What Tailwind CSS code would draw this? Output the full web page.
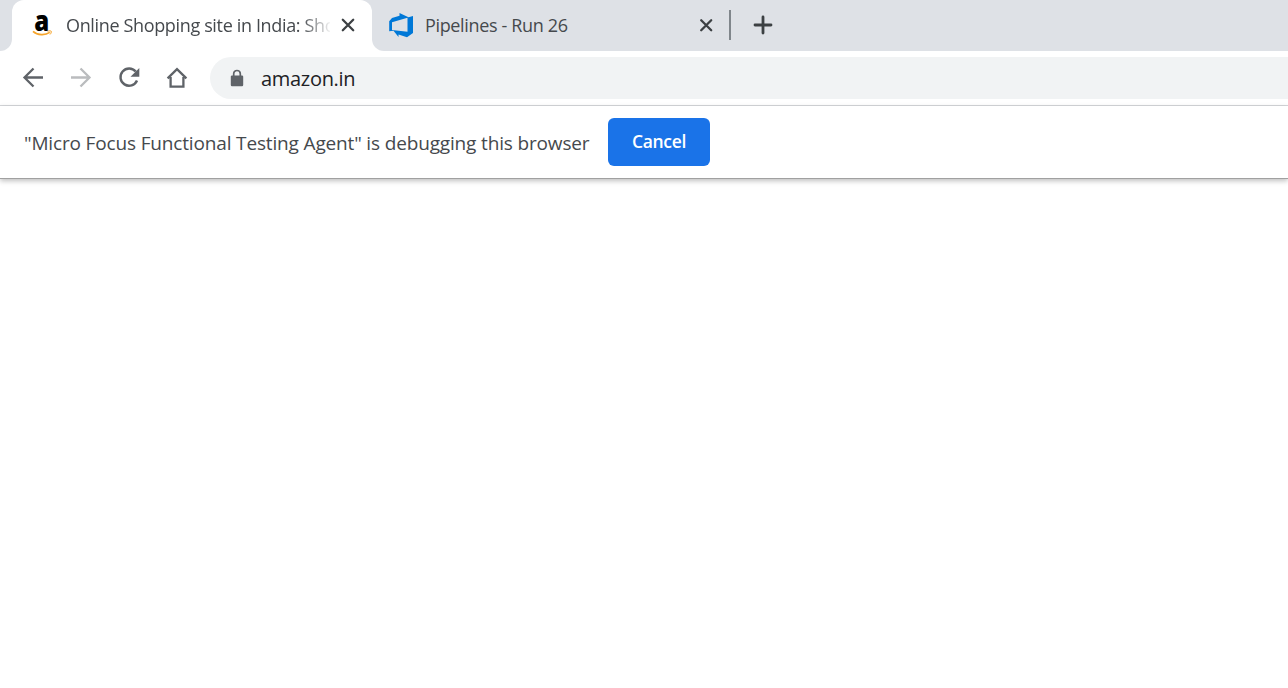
<!DOCTYPE html>
<html lang="en">
<head>
<meta charset="utf-8">
<title>Online Shopping site in India</title>
<script src="https://cdn.jsdelivr.net/npm/@tailwindcss/browser@4"></script>
</head>
<body class="w-[1288px] h-[688px] overflow-hidden bg-white font-['Open_Sans','Noto_Sans',sans-serif]">
<div class="flex flex-col h-full">
  <header class="flex h-[51px] bg-white">
    <div class="w-3 bg-[#dee1e6] rounded-br-[12px]"></div>
    <div class="w-[360px] bg-[#dee1e6]">
      <div class="flex items-center h-full bg-white rounded-t-[12px] pl-[18px] pb-[2px]">
        <svg class="w-6 h-[26px] shrink-0 overflow-visible" viewBox="0 0 24 26">
          <text x="4.200" y="18.900" font-family="Open Sans" font-weight="800" font-size="28.500" textLength="15" lengthAdjust="spacingAndGlyphs" fill="#000">a</text>
          <path d="M3 19.300C7.500 23.400 15 23.600 19.800 20.400" fill="none" stroke="#f7a52b" stroke-width="1.700"/>
          <path d="M17.500 19.200C19.500 18.700 21.500 18.800 21.400 19.500 21.300 20.800 20.800 21.800 20 22.500" fill="none" stroke="#f7a52b" stroke-width="1"/>
        </svg>
        <div class="ml-3 w-[264px] shrink-0 overflow-hidden whitespace-nowrap text-[18px] leading-[26px] tracking-[-0.35px] text-[#45494d] mask-r-from-[24px] mask-r-to-[0px] mask-linear-[none] [mask-image:linear-gradient(to_right,black_236px,transparent_266px)]">Online Shopping site in India: Sho</div>
        <svg class="ml-[10px] w-4 h-4 shrink-0" viewBox="0 0 16 16"><path d="M2.800 2.800l10.400 10.400M13.200 2.800L2.800 13.200" stroke="#3c4043" stroke-width="2.300" stroke-linecap="round"/></svg>
      </div>
    </div>
    <div class="flex-1 flex items-center bg-[#dee1e6] rounded-bl-[12px] pl-4 pb-[2px]">
      <svg class="w-[26px] h-[26px]" viewBox="0 0 26 26"><path fill="#0078d7" fill-rule="evenodd" d="M11.500 1L20.500 5.300 25 4v17l-6 4.200-8.500-2.700v2.500L5.500 18.800 1.200 19.200V9.300L4 6l7.500-2.200zM4 10.200v7.800l15.500 1.700V5.700z"/></svg>
      <div class="ml-[11px] w-[273px] whitespace-nowrap text-[18px] leading-[26px] tracking-[-0.35px] text-[#45494d]">Pipelines - Run 26</div>
      <svg class="w-4 h-4" viewBox="0 0 16 16"><path d="M3.200 3.200l10 10M13.200 3.200l-10 10" stroke="#3c4043" stroke-width="2.300" stroke-linecap="round"/></svg>
      <div class="ml-[15px] w-[1.500px] h-[30px] bg-[#80868b]"></div>
      <svg class="ml-[22.500px] w-5 h-5" viewBox="0 0 20 20"><path d="M10 2v16M2 10h16" stroke="#3c4043" stroke-width="2.800" stroke-linecap="round"/></svg>
    </div>
  </header>
  <nav class="flex items-center h-[55px] border-b border-[#d6d8db] pl-[21px]">
    <svg class="w-6 h-6" viewBox="0 0 24 24"><path d="M22 11.500H3.500M12.500 2.500l-9 9 9 9" fill="none" stroke="#5f6368" stroke-width="2.300"/></svg>
    <svg class="ml-6 w-6 h-6" viewBox="0 0 24 24"><path d="M2 11.500h18.500M11.500 2.500l9 9-9 9" fill="none" stroke="#babcbe" stroke-width="2.300"/></svg>
    <svg class="ml-6 w-6 h-6" viewBox="0 0 24 24"><path d="M18.700 5.600A8.600 8.600 0 1 0 20 14.500" fill="none" stroke="#5f6368" stroke-width="2.400"/><path d="M22.300 2v8.800h-8.800z" fill="#5f6368"/></svg>
    <svg class="ml-6 w-6 h-6" viewBox="0 0 24 24"><path d="M5.600 11v9.700h12.800V11M2.600 12.300L12 3.200l9.400 9.100" fill="none" stroke="#5f6368" stroke-width="2.300"/></svg>
    <div class="ml-[21px] flex-1 h-[42px] flex items-center bg-[#f1f3f4] rounded-l-full pl-5">
      <svg class="w-[14px] h-[18px]" viewBox="0 0 14 18"><rect x="0.800" y="6.500" width="12.400" height="10.700" rx="1.200" fill="#5f6368"/><path d="M3.700 7V4.800a3.300 3.300 0 0 1 6.600 0v2.200" fill="none" stroke="#5f6368" stroke-width="1.700"/></svg>
      <div class="ml-[17px] pt-[2px] text-[20px] leading-[28px] tracking-[-0.3px] text-[#202124]">amazon.in</div>
    </div>
  </nav>
  <section class="flex items-center h-[73px] border-b border-[#a0a0a0] pl-6 shadow-[0_2px_5px_rgba(0,0,0,0.25)]">
    <div class="w-[584px] pt-[2px] whitespace-nowrap text-[19px] leading-[28px] tracking-[-0.155px] text-[#45494d]">"Micro Focus Functional Testing Agent" is debugging this browser</div>
    <button class="w-[102px] h-12 pb-px rounded-[6px] bg-[#1a73e8] text-white text-[17.500px] font-semibold tracking-[-0.35px]">Cancel</button>
  </section>
  <main class="flex-1"></main>
</div>
</body>
</html>
